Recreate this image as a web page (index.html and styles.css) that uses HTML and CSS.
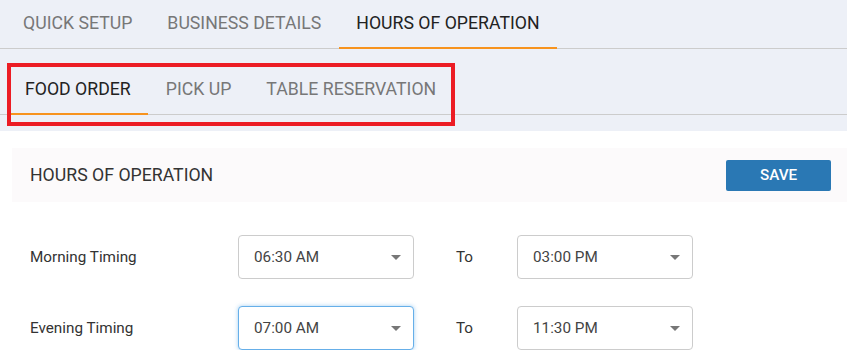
FILE: index.html
```html
<!DOCTYPE html>
<html>
<head>
<meta charset="utf-8">
<link rel="stylesheet" href="styles.css">
</head>
<body>
<div class="top">
  <nav class="tabs main-tabs">
    <div class="tab first">QUICK SETUP</div>
    <div class="tab">BUSINESS DETAILS</div>
    <div class="tab active">HOURS OF OPERATION</div>
  </nav>
  <nav class="tabs sub-tabs">
    <div class="tab active">FOOD ORDER</div>
    <div class="tab">PICK UP</div>
    <div class="tab">TABLE RESERVATION</div>
    <div class="highlight"></div>
  </nav>
</div>
<section class="content">
  <div class="panel-head">
    <div class="panel-title">HOURS OF OPERATION</div>
    <button class="btn-save">SAVE</button>
  </div>
  <div class="timing-grid">
    <div class="label">Morning Timing</div>
    <div class="select"><span>06:30 AM</span><i class="caret"></i></div>
    <div class="to">To</div>
    <div class="select"><span>03:00 PM</span><i class="caret"></i></div>

    <div class="label">Evening Timing</div>
    <div class="select focused"><span>07:00 AM</span><i class="caret"></i></div>
    <div class="to">To</div>
    <div class="select"><span>11:30 PM</span><i class="caret"></i></div>
  </div>
</section>
</body>
</html>
```
FILE: styles.css
```css
* { box-sizing: border-box; }
html, body { margin: 0; padding: 0; }
body {
  font-family: Roboto, "Liberation Sans", sans-serif;
  background: #ffffff;
  color: #333;
  width: 847px;
  overflow: hidden;
}
.top {
  background: #edf0f7;
  padding-bottom: 16px;
}
.tabs {
  display: flex;
  border-bottom: 1px solid #cccccc;
  position: relative;
}
.main-tabs {
  height: 49px;
  padding-left: 5.5px;
}
.sub-tabs {
  height: 50px;
  margin-top: 16px;
  padding-left: 7.5px;
}
.tab {
  font-size: 17.7px;
  color: #777777;
  padding: 0 17.5px;
  height: 49px;
  line-height: 47px;
  margin-bottom: -1px;
  border-bottom: 2px solid transparent;
  white-space: nowrap;
}
.sub-tabs .tab { height: 50px; line-height: 48px; }
.tab.active {
  color: #222222;
  border-bottom-color: #f7931e;
}
.highlight {
  position: absolute;
  left: 7px;
  top: -2px;
  width: 448px;
  height: 63px;
  border: 4px solid #ec1c24;
}
.content {
  padding: 17px 0 0 12px;
}
.panel-head {
  height: 54px;
  background: #fcfafb;
  display: flex;
  align-items: center;
  justify-content: space-between;
  padding: 0 16px 0 18px;
}
.panel-title {
  font-size: 17.7px;
  color: #333333;
}
.btn-save {
  width: 105px;
  height: 31px;
  border: 0;
  border-radius: 2px;
  background: #2a78b4;
  color: #ffffff;
  font-family: Roboto, "Liberation Sans", sans-serif;
  font-size: 15.25px;
  font-weight: 500;
}
.timing-grid {
  display: grid;
  grid-template-columns: 208px 176px 103px 176px;
  grid-auto-rows: 44px;
  row-gap: 27px;
  align-items: center;
  margin-top: 33px;
  padding-left: 18px;
}
.label {
  font-size: 15.25px;
  color: #333333;
}
.to {
  font-size: 15.25px;
  color: #333333;
  padding-left: 42px;
}
.select {
  height: 44px;
  border: 1px solid #cccccc;
  border-radius: 4px;
  background: #ffffff;
  display: flex;
  align-items: center;
  justify-content: space-between;
  padding: 0 12px 0 15px;
  font-size: 15.25px;
  color: #444444;
}
.select.focused {
  border-color: #66afe9;
  box-shadow: 0 0 4px rgba(102, 175, 233, 0.6);
}
.caret {
  width: 0;
  height: 0;
  border-left: 5px solid transparent;
  border-right: 5px solid transparent;
  border-top: 5px solid #777777;
}
```
